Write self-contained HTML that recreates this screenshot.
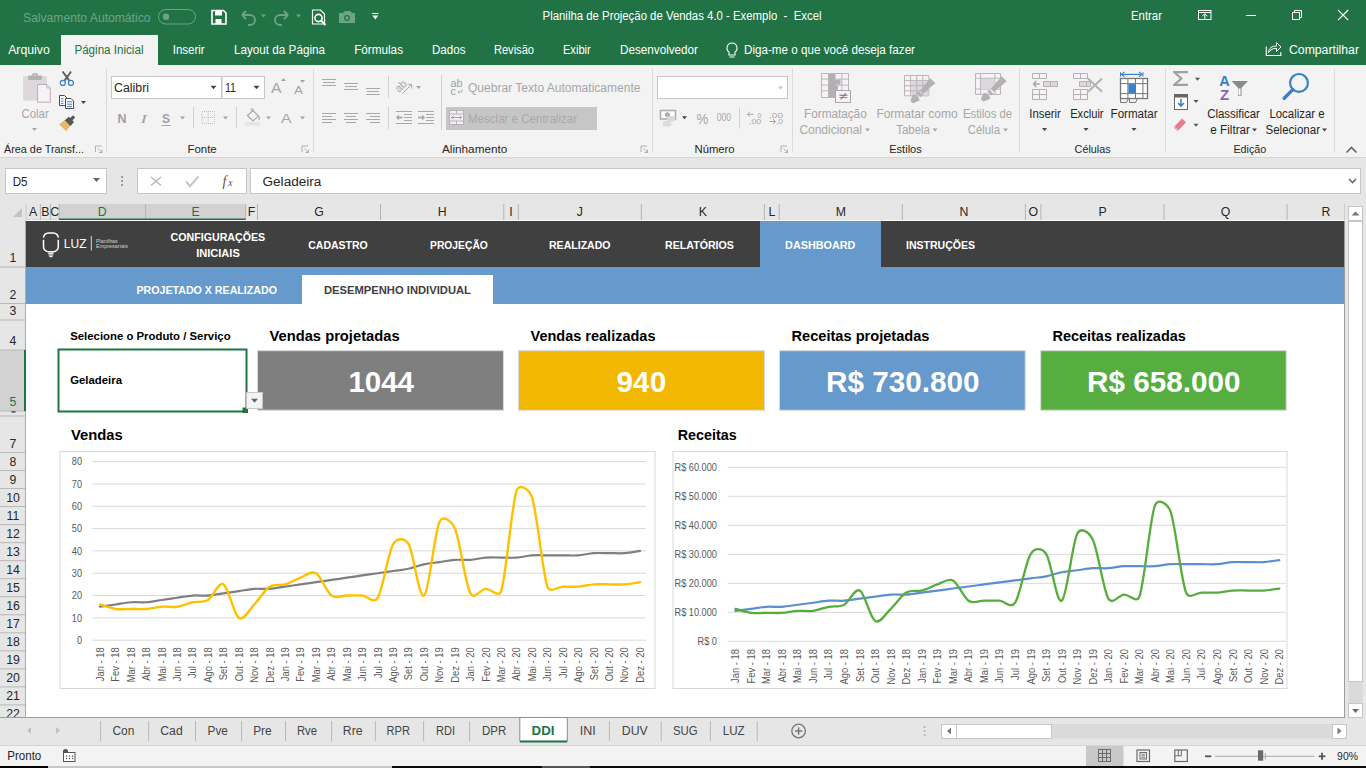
<!DOCTYPE html>
<html><head><meta charset="utf-8"><style>
html,body{margin:0;padding:0;width:1366px;height:768px;overflow:hidden;background:#fff;}
svg{display:block;font-family:"Liberation Sans",sans-serif;}
</style></head><body>
<svg width="1366" height="768" viewBox="0 0 1366 768">
<rect x="0" y="0" width="1366" height="65" fill="#217346" />
<rect x="0" y="65" width="1366" height="92" fill="#f3f3f3" />
<line x1="0" y1="157.5" x2="1366" y2="157.5" stroke="#d5d5d5" stroke-width="1" />
<rect x="0" y="158" width="1366" height="560" fill="#e6e6e6" />
<rect x="0" y="718" width="1366" height="27" fill="#e6e6e6" />
<rect x="0" y="745" width="1366" height="21" fill="#f3f3f3" />
<line x1="0" y1="745.5" x2="1366" y2="745.5" stroke="#d5d5d5" stroke-width="1" />
<rect x="0" y="766" width="1366" height="2" fill="#111" />
<text x="23.0" y="22.0" font-size="12" fill="#6ea486" textLength="127.5" lengthAdjust="spacingAndGlyphs" >Salvamento Automático</text>
<rect x="158.5" y="9.5" width="37" height="14.5" rx="7.25" fill="none" stroke="#6ea486" stroke-width="1"/>
<circle cx="166" cy="16.8" r="3.2" fill="#6ea486"/>
<path d="M212,10.5 h11.5 l2.5,2.5 v11 h-14 z" fill="none" stroke="#fff" stroke-width="1.6" />
<rect x="215" y="11" width="7" height="4.5" fill="#fff" />
<rect x="215.5" y="19" width="6" height="5" fill="#fff" />
<path d="M242,15 l4,-4 M242,15 l4,4 M242,15 h8 a5,5 0 0 1 0,10 h-2" fill="none" stroke="#6ea486" stroke-width="1.8" />
<path d="M261.0,14.5 L266.0,14.5 L263.5,17.5 Z" fill="#6ea486" />
<path d="M288,15 l-4,-4 M288,15 l-4,4 M288,15 h-8 a5,5 0 0 0 0,10 h2" fill="none" stroke="#6ea486" stroke-width="1.8" />
<path d="M296.0,14.5 L301.0,14.5 L298.5,17.5 Z" fill="#6ea486" />
<path d="M312.5,10 h8 l4,4 v10 h-12 z" fill="none" stroke="#fff" stroke-width="1.2" />
<circle cx="318.5" cy="18" r="3.6" fill="none" stroke="#fff" stroke-width="1.6"/>
<line x1="321" y1="20.5" x2="325.5" y2="25" stroke="#fff" stroke-width="2" />
<path d="M339,13 h4 l2,-2 h5 l2,2 h3 v10 h-16 z" fill="#6ea486" />
<circle cx="347" cy="18" r="3" fill="#217346"/>
<circle cx="347" cy="18" r="1.8" fill="#6ea486"/>
<line x1="372" y1="13.5" x2="378.5" y2="13.5" stroke="#fff" stroke-width="1" />
<path d="M372.3,15.5 L378.3,15.5 L375.3,19.5 Z" fill="#fff" />
<text x="542.6" y="19.9" font-size="12" fill="#fff" textLength="278.9" lengthAdjust="spacingAndGlyphs" xml:space="preserve">Planilha de Projeção de Vendas 4.0 - Exemplo  -  Excel</text>
<text x="1131.0" y="20.0" font-size="12" fill="#fff" textLength="31.0" lengthAdjust="spacingAndGlyphs" >Entrar</text>
<rect x="1198.5" y="10.5" width="12.5" height="9" fill="none" stroke="#fff" stroke-width="1" />
<line x1="1198.5" y1="12.5" x2="1211" y2="12.5" stroke="#fff" stroke-width="1" />
<path d="M1202.2,16.3 l2.6,-2.6 l2.6,2.6" fill="none" stroke="#fff" stroke-width="1" />
<line x1="1204.8" y1="14" x2="1204.8" y2="19.5" stroke="#fff" stroke-width="1" />
<line x1="1246" y1="15.5" x2="1256" y2="15.5" stroke="#fff" stroke-width="1" />
<rect x="1292.5" y="12.5" width="7" height="7" fill="none" stroke="#fff" stroke-width="1" />
<path d="M1294.5,12.5 v-2 h7 v7 h-2" fill="none" stroke="#fff" stroke-width="1" />
<line x1="1338" y1="10" x2="1348.2" y2="20.2" stroke="#fff" stroke-width="1.1" />
<line x1="1348.2" y1="10" x2="1338" y2="20.2" stroke="#fff" stroke-width="1.1" />
<rect x="61" y="35" width="97" height="30" fill="#f3f3f3" />
<text x="8.2" y="53.8" font-size="12" fill="#fff" textLength="41.6" lengthAdjust="spacingAndGlyphs" >Arquivo</text>
<text x="74.4" y="53.8" font-size="12" fill="#217346" textLength="69.1" lengthAdjust="spacingAndGlyphs" >Página Inicial</text>
<text x="172.7" y="53.8" font-size="12" fill="#fff" textLength="32.0" lengthAdjust="spacingAndGlyphs" >Inserir</text>
<text x="234.0" y="53.8" font-size="12" fill="#fff" textLength="91.0" lengthAdjust="spacingAndGlyphs" >Layout da Página</text>
<text x="354.2" y="53.8" font-size="12" fill="#fff" textLength="48.8" lengthAdjust="spacingAndGlyphs" >Fórmulas</text>
<text x="432.0" y="53.8" font-size="12" fill="#fff" textLength="33.5" lengthAdjust="spacingAndGlyphs" >Dados</text>
<text x="493.9" y="53.8" font-size="12" fill="#fff" textLength="40.1" lengthAdjust="spacingAndGlyphs" >Revisão</text>
<text x="562.9" y="53.8" font-size="12" fill="#fff" textLength="27.9" lengthAdjust="spacingAndGlyphs" >Exibir</text>
<text x="620.0" y="53.8" font-size="12" fill="#fff" textLength="78.0" lengthAdjust="spacingAndGlyphs" >Desenvolvedor</text>
<text x="744.0" y="53.8" font-size="12" fill="#fff" textLength="171.0" lengthAdjust="spacingAndGlyphs" >Diga-me o que você deseja fazer</text>
<text x="1289.0" y="53.8" font-size="12" fill="#fff" textLength="70.0" lengthAdjust="spacingAndGlyphs" >Compartilhar</text>
<path d="M732,43 a5,5 0 0 0 -3,9 v3 h6 v-3 a5,5 0 0 0 -3,-9 z" fill="none" stroke="#fff" stroke-width="1.1" />
<line x1="729.5" y1="57" x2="734.5" y2="57" stroke="#fff" stroke-width="1" />
<path d="M1266.3,46.5 v9 h14.5 v-3.5" fill="none" stroke="#fff" stroke-width="1.1" />
<path d="M1268.5,52.5 c0.5,-4.5 3.5,-6.5 8,-6.5 v-3.3 l4.5,4.3 l-4.5,4.3 v-3 c-3.5,0 -6,1.2 -8,4.2 z" fill="none" stroke="#fff" stroke-width="1" />
<rect x="23" y="76" width="24" height="24.6" rx="1.5" fill="#dcd8dc"/>
<rect x="28" y="75.5" width="14" height="4.4" rx="1" fill="#b4b1b4"/>
<rect x="32.3" y="73.3" width="5.5" height="3.5" rx="1" fill="#b4b1b4"/>
<circle cx="35" cy="75.3" r="0.9" fill="#dcd8dc"/>
<path d="M37.6,84.5 h9.2 l3.5,3.5 v14.2 h-12.7 z" fill="#f6f2f6" stroke="#b4b1b4" stroke-width="1" />
<path d="M46.8,84.5 v3.5 h3.5" fill="none" stroke="#b4b1b4" stroke-width="0.8" />
<text x="21.5" y="118.0" font-size="12" fill="#a6a6a6" textLength="27.2" lengthAdjust="spacingAndGlyphs" >Colar</text>
<path d="M32.0,128.0 L37.0,128.0 L34.5,131.0 Z" fill="#a6a6a6" />
<path d="M62.6,71.5 L69.2,80.6 M71.1,71.5 L64.5,80.6" fill="none" stroke="#5a5a5a" stroke-width="1.8" />
<circle cx="62.8" cy="82.9" r="2.5" fill="none" stroke="#3b7fc4" stroke-width="1.2"/>
<circle cx="70.9" cy="82.9" r="2.5" fill="none" stroke="#3b7fc4" stroke-width="1.2"/>
<path d="M59.5,95.5 h5 l2,2 v8 h-7 z" fill="#fff" stroke="#4a4a4a" stroke-width="1" />
<line x1="61" y1="98.8" x2="63.5" y2="98.8" stroke="#3b7fc4" stroke-width="1" />
<line x1="61" y1="101.2" x2="63.5" y2="101.2" stroke="#3b7fc4" stroke-width="1" />
<line x1="61" y1="103.6" x2="63.5" y2="103.6" stroke="#3b7fc4" stroke-width="1" />
<path d="M65.5,98.5 h5.5 l2.5,2.5 v7.5 h-8 z" fill="#fff" stroke="#4a4a4a" stroke-width="1" />
<line x1="67" y1="101.8" x2="72" y2="101.8" stroke="#3b7fc4" stroke-width="1" />
<line x1="67" y1="104.2" x2="72" y2="104.2" stroke="#3b7fc4" stroke-width="1" />
<line x1="67" y1="106.6" x2="72" y2="106.6" stroke="#3b7fc4" stroke-width="1" />
<path d="M81.0,100.9 L86.0,100.9 L83.5,103.9 Z" fill="#444" />
<path d="M59.2,124.5 L65,119.8 L70.5,125.5 L66.3,131.2 Z" fill="#e6b66a" />
<path d="M64.8,120.3 l4,-3.5 l5.2,5.2 l-3.5,4 z" fill="#555" />
<path d="M69.5,118.8 l3.5,-3.5 l2.2,2.2 l-3.5,3.5 z" fill="#555" />
<text x="4.0" y="152.7" font-size="11" fill="#262626" textLength="80.0" lengthAdjust="spacingAndGlyphs" >Área de Transf...</text>
<path d="M95.5,152 v-6 h6" fill="none" stroke="#a8a8a8" stroke-width="0.9" />
<path d="M98.0,148.5 l4,4 M102.0,149.5 v3 h-3" fill="none" stroke="#a8a8a8" stroke-width="0.9" />
<line x1="106.5" y1="69" x2="106.5" y2="152" stroke="#dadada" stroke-width="1" />
<rect x="111.5" y="76.5" width="110" height="22" fill="#fff" stroke="#c6c6c6" stroke-width="1" />
<text x="114.0" y="91.5" font-size="12.3" fill="#262626" textLength="35.0" lengthAdjust="spacingAndGlyphs" >Calibri</text>
<path d="M210.5,85.75 L216.5,85.75 L213.5,89.25 Z" fill="#444" />
<rect x="222" y="76.5" width="42.5" height="22" fill="#fff" stroke="#c6c6c6" stroke-width="1" />
<text x="225.0" y="91.5" font-size="12.3" fill="#262626" textLength="11.0" lengthAdjust="spacingAndGlyphs" >11</text>
<path d="M253.5,85.75 L259.5,85.75 L256.5,89.25 Z" fill="#444" />
<text x="271.0" y="93.0" font-size="14" fill="#a6a6a6" textLength="10.5" lengthAdjust="spacingAndGlyphs" >A</text>
<path d="M281,81 l2.5,-3 l2.5,3 z" fill="#a6a6a6" />
<text x="294.0" y="94.0" font-size="11" fill="#a6a6a6" textLength="9.0" lengthAdjust="spacingAndGlyphs" >A</text>
<path d="M300,80 l2.5,3 l2.5,-3 z" fill="#a6a6a6" />
<text x="117.5" y="122.5" font-size="12" fill="#a0a0a0" font-weight="bold" textLength="9.0" lengthAdjust="spacingAndGlyphs" >N</text>
<text x="140.5" y="122.5" font-size="12.5" fill="#a0a0a0" textLength="6.5" lengthAdjust="spacingAndGlyphs" font-style="italic" font-family="Liberation Serif">I</text>
<text x="162.0" y="122.5" font-size="12" fill="#a0a0a0" font-weight="bold" textLength="8.0" lengthAdjust="spacingAndGlyphs" >S</text>
<line x1="161.5" y1="125.5" x2="170.5" y2="125.5" stroke="#a6a6a6" stroke-width="1" />
<path d="M180.0,116.5 L185.0,116.5 L182.5,119.5 Z" fill="#a6a6a6" />
<line x1="193.5" y1="107" x2="193.5" y2="128" stroke="#d0d0d0" stroke-width="1" />
<rect x="202" y="111.5" width="12.5" height="12" fill="none" stroke="#c9b9c9" stroke-width="1" stroke-dasharray="1,1"/>
<line x1="208.2" y1="111.5" x2="208.2" y2="123.5" stroke="#c9b9c9" stroke-width="1" stroke-dasharray="1,1"/>
<line x1="202" y1="117.5" x2="214.5" y2="117.5" stroke="#c9b9c9" stroke-width="1" stroke-dasharray="1,1"/>
<path d="M223.0,116.5 L228.0,116.5 L225.5,119.5 Z" fill="#a6a6a6" />
<line x1="236.5" y1="107" x2="236.5" y2="128" stroke="#d0d0d0" stroke-width="1" />
<path d="M247.5,115.5 l5.5,-5 l5.5,5.5 l-5.5,5 z" fill="none" stroke="#a8a8a8" stroke-width="1.1" />
<path d="M251,110.5 v-1.5 h2 v3" fill="none" stroke="#a8a8a8" stroke-width="1" />
<path d="M258.5,116 q1.5,2 0.5,4" fill="none" stroke="#a8a8a8" stroke-width="1.2" />
<rect x="244.5" y="122.2" width="15.5" height="3.3" fill="#e6e1e6" />
<path d="M266.0,116.5 L271.0,116.5 L268.5,119.5 Z" fill="#a6a6a6" />
<text x="281.0" y="122.5" font-size="13" fill="#a6a6a6" textLength="10.5" lengthAdjust="spacingAndGlyphs" >A</text>
<path d="M300.0,116.5 L305.0,116.5 L302.5,119.5 Z" fill="#a6a6a6" />
<text x="187.4" y="152.7" font-size="11" fill="#262626" textLength="29.3" lengthAdjust="spacingAndGlyphs" >Fonte</text>
<path d="M302,152 v-6 h6" fill="none" stroke="#a8a8a8" stroke-width="0.9" />
<path d="M304.5,148.5 l4,4 M308.5,149.5 v3 h-3" fill="none" stroke="#a8a8a8" stroke-width="0.9" />
<line x1="313.5" y1="69" x2="313.5" y2="152" stroke="#dadada" stroke-width="1" />
<line x1="322" y1="79.5" x2="336" y2="79.5" stroke="#a8a8a8" stroke-width="1" />
<line x1="323" y1="82.5" x2="335" y2="82.5" stroke="#a8a8a8" stroke-width="1" />
<line x1="322" y1="85.5" x2="336" y2="85.5" stroke="#a8a8a8" stroke-width="1" />
<line x1="344" y1="83.5" x2="358" y2="83.5" stroke="#a8a8a8" stroke-width="1" />
<line x1="345" y1="86.5" x2="357" y2="86.5" stroke="#a8a8a8" stroke-width="1" />
<line x1="344" y1="89.5" x2="358" y2="89.5" stroke="#a8a8a8" stroke-width="1" />
<line x1="366" y1="88.5" x2="380" y2="88.5" stroke="#a8a8a8" stroke-width="1" />
<line x1="367" y1="91.5" x2="379" y2="91.5" stroke="#a8a8a8" stroke-width="1" />
<line x1="366" y1="94.5" x2="380" y2="94.5" stroke="#a8a8a8" stroke-width="1" />
<line x1="388.5" y1="76" x2="388.5" y2="98" stroke="#d0d0d0" stroke-width="1" />
<text x="0" y="0" font-size="11" fill="#a8a8a8" transform="translate(399,93) rotate(-45)">ab</text>
<line x1="402.5" y1="93.5" x2="411.5" y2="84.5" stroke="#a8a8a8" stroke-width="1" />
<path d="M407.5,84.3 h4.2 v4.2" fill="none" stroke="#a8a8a8" stroke-width="1" />
<path d="M416.0,86.0 L421.0,86.0 L418.5,89.0 Z" fill="#a8a8a8" />
<line x1="441.5" y1="75" x2="441.5" y2="130" stroke="#d0d0d0" stroke-width="1" />
<text x="450.5" y="87.0" font-size="10.5" fill="#a0a0a0" textLength="12.0" lengthAdjust="spacingAndGlyphs" >ab</text>
<text x="450.5" y="94.5" font-size="10.5" fill="#a0a0a0" textLength="5.5" lengthAdjust="spacingAndGlyphs" >c</text>
<path d="M462,89 v3 h-4 m1.5,-1.5 l-1.5,1.5 l1.5,1.5" fill="none" stroke="#a6a6a6" stroke-width="0.8" />
<text x="468.0" y="92.0" font-size="12" fill="#a6a6a6" textLength="172.5" lengthAdjust="spacingAndGlyphs" >Quebrar Texto Automaticamente</text>
<line x1="322" y1="113.5" x2="336" y2="113.5" stroke="#a8a8a8" stroke-width="1" />
<line x1="322" y1="116.5" x2="332" y2="116.5" stroke="#a8a8a8" stroke-width="1" />
<line x1="322" y1="119.5" x2="336" y2="119.5" stroke="#a8a8a8" stroke-width="1" />
<line x1="322" y1="122.5" x2="332" y2="122.5" stroke="#a8a8a8" stroke-width="1" />
<line x1="344" y1="113.5" x2="358" y2="113.5" stroke="#a8a8a8" stroke-width="1" />
<line x1="346" y1="116.5" x2="356" y2="116.5" stroke="#a8a8a8" stroke-width="1" />
<line x1="344" y1="119.5" x2="358" y2="119.5" stroke="#a8a8a8" stroke-width="1" />
<line x1="346" y1="122.5" x2="356" y2="122.5" stroke="#a8a8a8" stroke-width="1" />
<line x1="366" y1="113.5" x2="380" y2="113.5" stroke="#a8a8a8" stroke-width="1" />
<line x1="370" y1="116.5" x2="380" y2="116.5" stroke="#a8a8a8" stroke-width="1" />
<line x1="366" y1="119.5" x2="380" y2="119.5" stroke="#a8a8a8" stroke-width="1" />
<line x1="370" y1="122.5" x2="380" y2="122.5" stroke="#a8a8a8" stroke-width="1" />
<line x1="388.5" y1="107" x2="388.5" y2="129" stroke="#d0d0d0" stroke-width="1" />
<line x1="396" y1="111.5" x2="412" y2="111.5" stroke="#a8a8a8" stroke-width="1" />
<line x1="404" y1="114.5" x2="412" y2="114.5" stroke="#a8a8a8" stroke-width="1" />
<line x1="404" y1="117.5" x2="412" y2="117.5" stroke="#a8a8a8" stroke-width="1" />
<line x1="404" y1="120.5" x2="412" y2="120.5" stroke="#a8a8a8" stroke-width="1" />
<line x1="396" y1="123.5" x2="412" y2="123.5" stroke="#a8a8a8" stroke-width="1" />
<path d="M396,117.5 l3,-3 v6 z" fill="#a8a8a8" />
<rect x="398.5" y="116.6" width="4" height="1.8" fill="#a8a8a8" />
<line x1="418" y1="111.5" x2="434" y2="111.5" stroke="#a8a8a8" stroke-width="1" />
<line x1="426" y1="114.5" x2="434" y2="114.5" stroke="#a8a8a8" stroke-width="1" />
<line x1="426" y1="117.5" x2="434" y2="117.5" stroke="#a8a8a8" stroke-width="1" />
<line x1="426" y1="120.5" x2="434" y2="120.5" stroke="#a8a8a8" stroke-width="1" />
<line x1="418" y1="123.5" x2="434" y2="123.5" stroke="#a8a8a8" stroke-width="1" />
<path d="M425,117.5 l-3,-3 v6 z" fill="#a8a8a8" />
<rect x="418" y="116.6" width="4.5" height="1.8" fill="#a8a8a8" />
<rect x="446" y="107" width="151" height="23" fill="#c6c6c6" />
<rect x="449.5" y="110.5" width="14" height="14" fill="#f3eff3" stroke="#b8b0b8" stroke-width="1" />
<line x1="449.5" y1="114" x2="463.5" y2="114" stroke="#b8b0b8" stroke-width="1" />
<line x1="449.5" y1="121" x2="463.5" y2="121" stroke="#b8b0b8" stroke-width="1" />
<line x1="456.5" y1="110.5" x2="456.5" y2="114" stroke="#b8b0b8" stroke-width="1" />
<line x1="456.5" y1="121" x2="456.5" y2="124.5" stroke="#b8b0b8" stroke-width="1" />
<path d="M451.5,117.5 h10 M451.5,117.5 l2,-1.8 M451.5,117.5 l2,1.8 M461.5,117.5 l-2,-1.8 M461.5,117.5 l-2,1.8" fill="none" stroke="#a09aa0" stroke-width="0.9" />
<text x="468.0" y="122.5" font-size="12" fill="#a9a9a9" textLength="109.0" lengthAdjust="spacingAndGlyphs" >Mesclar e Centralizar</text>
<text x="442.0" y="152.7" font-size="11" fill="#262626" textLength="65.3" lengthAdjust="spacingAndGlyphs" >Alinhamento</text>
<path d="M641,152 v-6 h6" fill="none" stroke="#a8a8a8" stroke-width="0.9" />
<path d="M643.5,148.5 l4,4 M647.5,149.5 v3 h-3" fill="none" stroke="#a8a8a8" stroke-width="0.9" />
<line x1="652.5" y1="69" x2="652.5" y2="152" stroke="#dadada" stroke-width="1" />
<rect x="657.5" y="76.5" width="130" height="22" fill="#fff" stroke="#c6c6c6" stroke-width="1" />
<path d="M778.0,86.5 L783.0,86.5 L780.5,89.5 Z" fill="#c0c0c0" />
<rect x="660.5" y="110.5" width="15" height="8.5" fill="#ffffff" stroke="#b0acb0" stroke-width="1.6" />
<circle cx="667.5" cy="114.8" r="2.6" fill="#b0acb0"/>
<ellipse cx="671" cy="117.5" rx="4.5" ry="1.4" fill="#dcd8dc"/>
<ellipse cx="671" cy="120" rx="4.5" ry="1.4" fill="#dcd8dc"/>
<ellipse cx="667" cy="122.5" rx="4.5" ry="1.4" fill="#dcd8dc"/>
<ellipse cx="667" cy="125" rx="4.5" ry="1.4" fill="#dcd8dc"/>
<path d="M682.0,116.3 L687.0,116.3 L684.5,119.3 Z" fill="#444" />
<text x="696.6" y="124.0" font-size="15" fill="#a6a6a6" textLength="11.8" lengthAdjust="spacingAndGlyphs" >%</text>
<text x="716.8" y="121.0" font-size="10" fill="#a6a6a6" textLength="14.3" lengthAdjust="spacingAndGlyphs" >000</text>
<line x1="739.5" y1="107.5" x2="739.5" y2="128.5" stroke="#d0d0d0" stroke-width="1" />
<path d="M747.5,114.3 h6 M747.5,114.3 l2.5,-2.5 M747.5,114.3 l2.5,2.5" fill="none" stroke="#a6a6a6" stroke-width="1" />
<text x="757.5" y="117.5" font-size="7.5" fill="#a6a6a6" textLength="3.8" lengthAdjust="spacingAndGlyphs" >0</text>
<text x="749.0" y="124.3" font-size="7.5" fill="#a6a6a6" textLength="12.3" lengthAdjust="spacingAndGlyphs" >,00</text>
<text x="769.0" y="117.5" font-size="7.5" fill="#a6a6a6" textLength="14.0" lengthAdjust="spacingAndGlyphs" >,00</text>
<path d="M769.5,121.5 h6 M775.5,121.5 l-2.5,-2.5 M775.5,121.5 l-2.5,2.5" fill="none" stroke="#a6a6a6" stroke-width="1" />
<text x="776.0" y="124.3" font-size="7.5" fill="#a6a6a6" textLength="7.0" lengthAdjust="spacingAndGlyphs" >,0</text>
<text x="694.5" y="152.7" font-size="11" fill="#262626" textLength="40.1" lengthAdjust="spacingAndGlyphs" >Número</text>
<path d="M781,152 v-6 h6" fill="none" stroke="#a8a8a8" stroke-width="0.9" />
<path d="M783.5,148.5 l4,4 M787.5,149.5 v3 h-3" fill="none" stroke="#a8a8a8" stroke-width="0.9" />
<line x1="792.5" y1="69" x2="792.5" y2="152" stroke="#dadada" stroke-width="1" />
<rect x="821.5" y="73.5" width="27.0" height="24.0" fill="#f6f2f6" />
<line x1="821.5" y1="73.5" x2="821.5" y2="97.5" stroke="#b9b5b9" stroke-width="1" />
<line x1="828.5" y1="73.5" x2="828.5" y2="97.5" stroke="#b9b5b9" stroke-width="1" />
<line x1="835" y1="73.5" x2="835" y2="97.5" stroke="#b9b5b9" stroke-width="1" />
<line x1="841.8" y1="73.5" x2="841.8" y2="97.5" stroke="#b9b5b9" stroke-width="1" />
<line x1="848.5" y1="73.5" x2="848.5" y2="97.5" stroke="#b9b5b9" stroke-width="1" />
<line x1="821.5" y1="73.5" x2="848.5" y2="73.5" stroke="#b9b5b9" stroke-width="1" />
<line x1="821.5" y1="79.1" x2="848.5" y2="79.1" stroke="#b9b5b9" stroke-width="1" />
<line x1="821.5" y1="85.1" x2="848.5" y2="85.1" stroke="#b9b5b9" stroke-width="1" />
<line x1="821.5" y1="90.8" x2="848.5" y2="90.8" stroke="#b9b5b9" stroke-width="1" />
<line x1="821.5" y1="97.5" x2="848.5" y2="97.5" stroke="#b9b5b9" stroke-width="1" />
<rect x="829" y="74" width="6" height="23" fill="#b3afb3" />
<rect x="835" y="79.6" width="5.5" height="5" fill="#b3afb3" />
<rect x="835" y="85.6" width="3" height="4.7" fill="#b3afb3" />
<rect x="835.5" y="90.5" width="15" height="12" fill="#f6f2f6" stroke="#aaa6aa" stroke-width="1" />
<text x="838.5" y="100.2" font-size="11" fill="#777" textLength="9.0" lengthAdjust="spacingAndGlyphs" >≠</text>
<text x="804.0" y="117.8" font-size="12" fill="#a6a6a6" textLength="62.7" lengthAdjust="spacingAndGlyphs" >Formatação</text>
<text x="799.4" y="133.7" font-size="12" fill="#a6a6a6" textLength="62.6" lengthAdjust="spacingAndGlyphs" >Condicional</text>
<path d="M865.0,128.5 L870.0,128.5 L867.5,131.5 Z" fill="#a6a6a6" />
<rect x="904.5" y="75.5" width="24.299999999999955" height="20.299999999999997" fill="#f6f2f6" />
<line x1="904.5" y1="75.5" x2="904.5" y2="95.8" stroke="#b9b5b9" stroke-width="1" />
<line x1="910.6" y1="75.5" x2="910.6" y2="95.8" stroke="#b9b5b9" stroke-width="1" />
<line x1="916.8" y1="75.5" x2="916.8" y2="95.8" stroke="#b9b5b9" stroke-width="1" />
<line x1="922.8" y1="75.5" x2="922.8" y2="95.8" stroke="#b9b5b9" stroke-width="1" />
<line x1="928.8" y1="75.5" x2="928.8" y2="95.8" stroke="#b9b5b9" stroke-width="1" />
<line x1="904.5" y1="75.5" x2="928.8" y2="75.5" stroke="#b9b5b9" stroke-width="1" />
<line x1="904.5" y1="80.6" x2="928.8" y2="80.6" stroke="#b9b5b9" stroke-width="1" />
<line x1="904.5" y1="85.7" x2="928.8" y2="85.7" stroke="#b9b5b9" stroke-width="1" />
<line x1="904.5" y1="90.8" x2="928.8" y2="90.8" stroke="#b9b5b9" stroke-width="1" />
<line x1="904.5" y1="95.8" x2="928.8" y2="95.8" stroke="#b9b5b9" stroke-width="1" />
<rect x="911" y="81" width="17.5" height="14.5" fill="#dcd8dc" />
<line x1="916.8" y1="80.6" x2="916.8" y2="95.8" stroke="#b9b5b9" stroke-width="1" />
<line x1="922.8" y1="80.6" x2="922.8" y2="95.8" stroke="#b9b5b9" stroke-width="1" />
<line x1="910.6" y1="85.7" x2="928.8" y2="85.7" stroke="#b9b5b9" stroke-width="1" />
<line x1="910.6" y1="90.8" x2="928.8" y2="90.8" stroke="#b9b5b9" stroke-width="1" />
<path d="M910.34,100.53 L913.15,94.16 Q918.81,94.86 919.53,100.51 L913.17,103.36 Q911.05,102.65 910.34,100.53 Z" fill="#b4b0b4" />
<path d="M916.47,93.24 L918.59,91.11 L922.56,95.06 L920.44,97.19 Z" fill="#b4b0b4" />
<path d="M920.07,90.47 L930.25,78.26 L935.35,83.34 L923.19,93.58 Z" fill="#b4b0b4" />
<text x="876.4" y="117.8" font-size="12" fill="#a6a6a6" textLength="81.2" lengthAdjust="spacingAndGlyphs" >Formatar como</text>
<text x="896.2" y="133.7" font-size="12" fill="#a6a6a6" textLength="33.8" lengthAdjust="spacingAndGlyphs" >Tabela</text>
<path d="M932.5,128.5 L937.5,128.5 L935,131.5 Z" fill="#a6a6a6" />
<rect x="975.5" y="73.5" width="25.0" height="20.900000000000006" fill="#f6f2f6" />
<line x1="975.5" y1="73.5" x2="975.5" y2="94.4" stroke="#b9b5b9" stroke-width="1" />
<line x1="980.6" y1="73.5" x2="980.6" y2="94.4" stroke="#b9b5b9" stroke-width="1" />
<line x1="994.9" y1="73.5" x2="994.9" y2="94.4" stroke="#b9b5b9" stroke-width="1" />
<line x1="1000.5" y1="73.5" x2="1000.5" y2="94.4" stroke="#b9b5b9" stroke-width="1" />
<line x1="975.5" y1="73.5" x2="1000.5" y2="73.5" stroke="#b9b5b9" stroke-width="1" />
<line x1="975.5" y1="78.3" x2="1000.5" y2="78.3" stroke="#b9b5b9" stroke-width="1" />
<line x1="975.5" y1="89.1" x2="1000.5" y2="89.1" stroke="#b9b5b9" stroke-width="1" />
<line x1="975.5" y1="94.4" x2="1000.5" y2="94.4" stroke="#b9b5b9" stroke-width="1" />
<rect x="981.1" y="78.8" width="13.3" height="9.8" fill="#dcd8dc" />
<path d="M980.96,98.72 L983.84,92.38 Q989.49,93.14 990.15,98.81 L983.76,101.58 Q981.64,100.85 980.96,98.72 Z" fill="#b4b0b4" />
<path d="M987.17,91.50 L989.31,89.39 L993.24,93.39 L991.10,95.49 Z" fill="#b4b0b4" />
<path d="M990.80,88.77 L1001.68,76.13 L1006.72,81.27 L993.89,91.91 Z" fill="#b4b0b4" />
<text x="963.0" y="117.8" font-size="12" fill="#a6a6a6" textLength="49.0" lengthAdjust="spacingAndGlyphs" >Estilos de</text>
<text x="967.7" y="133.7" font-size="12" fill="#a6a6a6" textLength="32.3" lengthAdjust="spacingAndGlyphs" >Célula</text>
<path d="M1003.0,128.5 L1008.0,128.5 L1005.5,131.5 Z" fill="#a6a6a6" />
<text x="889.2" y="152.7" font-size="11" fill="#262626" textLength="32.6" lengthAdjust="spacingAndGlyphs" >Estilos</text>
<line x1="1019.5" y1="69" x2="1019.5" y2="152" stroke="#dadada" stroke-width="1" />
<rect x="1032.5" y="73.5" width="14.0" height="5.0" fill="#f6f2f6" />
<line x1="1032.5" y1="73.5" x2="1032.5" y2="78.5" stroke="#b4b0b4" stroke-width="1" />
<line x1="1039.5" y1="73.5" x2="1039.5" y2="78.5" stroke="#b4b0b4" stroke-width="1" />
<line x1="1046.5" y1="73.5" x2="1046.5" y2="78.5" stroke="#b4b0b4" stroke-width="1" />
<line x1="1032.5" y1="73.5" x2="1046.5" y2="73.5" stroke="#b4b0b4" stroke-width="1" />
<line x1="1032.5" y1="78.5" x2="1046.5" y2="78.5" stroke="#b4b0b4" stroke-width="1" />
<rect x="1043.5" y="81.5" width="14.0" height="5.0" fill="#dcd8dc" />
<line x1="1043.5" y1="81.5" x2="1043.5" y2="86.5" stroke="#b4b0b4" stroke-width="1" />
<line x1="1050.5" y1="81.5" x2="1050.5" y2="86.5" stroke="#b4b0b4" stroke-width="1" />
<line x1="1057.5" y1="81.5" x2="1057.5" y2="86.5" stroke="#b4b0b4" stroke-width="1" />
<line x1="1043.5" y1="81.5" x2="1057.5" y2="81.5" stroke="#b4b0b4" stroke-width="1" />
<line x1="1043.5" y1="86.5" x2="1057.5" y2="86.5" stroke="#b4b0b4" stroke-width="1" />
<rect x="1032.5" y="89.5" width="14.0" height="10.0" fill="#f6f2f6" />
<line x1="1032.5" y1="89.5" x2="1032.5" y2="99.5" stroke="#b4b0b4" stroke-width="1" />
<line x1="1039.5" y1="89.5" x2="1039.5" y2="99.5" stroke="#b4b0b4" stroke-width="1" />
<line x1="1046.5" y1="89.5" x2="1046.5" y2="99.5" stroke="#b4b0b4" stroke-width="1" />
<line x1="1032.5" y1="89.5" x2="1046.5" y2="89.5" stroke="#b4b0b4" stroke-width="1" />
<line x1="1032.5" y1="94.5" x2="1046.5" y2="94.5" stroke="#b4b0b4" stroke-width="1" />
<line x1="1032.5" y1="99.5" x2="1046.5" y2="99.5" stroke="#b4b0b4" stroke-width="1" />
<path d="M1033.3,84 l3,-3 M1033.3,84 l3,3 M1033.3,84 h6.5" fill="none" stroke="#a8a8a8" stroke-width="1.6" />
<text x="1029.3" y="117.6" font-size="12" fill="#262626" textLength="31.5" lengthAdjust="spacingAndGlyphs" >Inserir</text>
<path d="M1042.0,128.0 L1047.0,128.0 L1044.5,131.0 Z" fill="#444" />
<rect x="1073.5" y="73.5" width="14.0" height="5.0" fill="#f6f2f6" />
<line x1="1073.5" y1="73.5" x2="1073.5" y2="78.5" stroke="#b4b0b4" stroke-width="1" />
<line x1="1080.5" y1="73.5" x2="1080.5" y2="78.5" stroke="#b4b0b4" stroke-width="1" />
<line x1="1087.5" y1="73.5" x2="1087.5" y2="78.5" stroke="#b4b0b4" stroke-width="1" />
<line x1="1073.5" y1="73.5" x2="1087.5" y2="73.5" stroke="#b4b0b4" stroke-width="1" />
<line x1="1073.5" y1="78.5" x2="1087.5" y2="78.5" stroke="#b4b0b4" stroke-width="1" />
<rect x="1079.5" y="81.5" width="11.0" height="5.0" fill="#dcd8dc" />
<line x1="1079.5" y1="81.5" x2="1079.5" y2="86.5" stroke="#b4b0b4" stroke-width="1" />
<line x1="1086.5" y1="81.5" x2="1086.5" y2="86.5" stroke="#b4b0b4" stroke-width="1" />
<line x1="1090.5" y1="81.5" x2="1090.5" y2="86.5" stroke="#b4b0b4" stroke-width="1" />
<line x1="1079.5" y1="81.5" x2="1090.5" y2="81.5" stroke="#b4b0b4" stroke-width="1" />
<line x1="1079.5" y1="86.5" x2="1090.5" y2="86.5" stroke="#b4b0b4" stroke-width="1" />
<rect x="1073.5" y="89.5" width="14.0" height="10.0" fill="#f6f2f6" />
<line x1="1073.5" y1="89.5" x2="1073.5" y2="99.5" stroke="#b4b0b4" stroke-width="1" />
<line x1="1080.5" y1="89.5" x2="1080.5" y2="99.5" stroke="#b4b0b4" stroke-width="1" />
<line x1="1087.5" y1="89.5" x2="1087.5" y2="99.5" stroke="#b4b0b4" stroke-width="1" />
<line x1="1073.5" y1="89.5" x2="1087.5" y2="89.5" stroke="#b4b0b4" stroke-width="1" />
<line x1="1073.5" y1="94.5" x2="1087.5" y2="94.5" stroke="#b4b0b4" stroke-width="1" />
<line x1="1073.5" y1="99.5" x2="1087.5" y2="99.5" stroke="#b4b0b4" stroke-width="1" />
<path d="M1088,78.4 L1102,91.7 M1102,78.4 L1088,91.7" fill="none" stroke="#b4b0b4" stroke-width="2" />
<text x="1070.2" y="117.8" font-size="12" fill="#262626" textLength="33.4" lengthAdjust="spacingAndGlyphs" >Excluir</text>
<path d="M1083.5,128.0 L1088.5,128.0 L1086,131.0 Z" fill="#444" />
<line x1="1121" y1="74.4" x2="1142.5" y2="74.4" stroke="#3b7fc4" stroke-width="1.2" />
<path d="M1121.5,74.4 l3,-2.5 M1121.5,74.4 l3,2.5 M1142,74.4 l-3,-2.5 M1142,74.4 l-3,2.5" fill="none" stroke="#3b7fc4" stroke-width="1.2" />
<line x1="1120.5" y1="72.2" x2="1120.5" y2="76.7" stroke="#3b7fc4" stroke-width="1" />
<line x1="1143" y1="72.2" x2="1143" y2="76.7" stroke="#3b7fc4" stroke-width="1" />
<rect x="1120.5" y="78.5" width="27" height="20" fill="#fff" stroke="#777" stroke-width="1.3" />
<line x1="1127.9" y1="78.5" x2="1127.9" y2="98.5" stroke="#777" stroke-width="1" />
<line x1="1135.5" y1="78.5" x2="1135.5" y2="98.5" stroke="#777" stroke-width="1" />
<line x1="1142.9" y1="78.5" x2="1142.9" y2="98.5" stroke="#777" stroke-width="1" />
<line x1="1120.5" y1="83.6" x2="1147.5" y2="83.6" stroke="#777" stroke-width="1" />
<line x1="1120.5" y1="93.6" x2="1147.5" y2="93.6" stroke="#777" stroke-width="1" />
<rect x="1128.4" y="84.1" width="6.6" height="9" fill="#3b7fc4" />
<path d="M1120.5,98.5 v4 h6 l2,-4 M1129.5,98.5 v4 h6 l2,-4" fill="none" stroke="#777" stroke-width="1" />
<text x="1110.6" y="117.8" font-size="12" fill="#262626" textLength="47.0" lengthAdjust="spacingAndGlyphs" >Formatar</text>
<path d="M1131.5,128.0 L1136.5,128.0 L1134,131.0 Z" fill="#444" />
<text x="1074.6" y="152.7" font-size="11" fill="#262626" textLength="36.0" lengthAdjust="spacingAndGlyphs" >Células</text>
<line x1="1165.5" y1="69" x2="1165.5" y2="152" stroke="#dadada" stroke-width="1" />
<path d="M1173,71 h15 v2.3 h-11 l6,5.2 l-6,5.2 h11 v2.3 h-15 v-1.6 l6.8,-5.9 l-6.8,-5.9 z" fill="#a0a0a0" />
<path d="M1195.0,77.7 L1200.0,77.7 L1197.5,80.7 Z" fill="#555" />
<rect x="1174.5" y="94.5" width="13" height="15" fill="#fff" stroke="#666" stroke-width="1" />
<rect x="1174.5" y="94.5" width="13" height="3" fill="#666" />
<path d="M1181,99 v7 m-3,-3 l3,3 l3,-3" fill="none" stroke="#3b7fc4" stroke-width="1.6" />
<path d="M1193.5,100.1 L1198.5,100.1 L1196,103.1 Z" fill="#555" />
<path d="M1174.5,126.5 l7.5,-8 l4,3.8 l-7.5,8 z" fill="#e8798f" />
<path d="M1174.5,126.5 l4,3.8 l-1,1 l-4,-3.8 z" fill="#f0a6b5" />
<path d="M1193.5,123.8 L1198.5,123.8 L1196,126.8 Z" fill="#555" />
<text x="1219.3" y="85.5" font-size="14.5" fill="#3b7fc4" font-weight="bold" textLength="10.5" lengthAdjust="spacingAndGlyphs" >A</text>
<text x="1220.0" y="99.6" font-size="14.5" fill="#8e5fb5" font-weight="bold" textLength="9.2" lengthAdjust="spacingAndGlyphs" >Z</text>
<path d="M1231.5,81 h16.5 l-6.5,6.8 v8 h-3.5 v-8 z" fill="#8a8a8a" />
<rect x="1238.5" y="88.5" width="2" height="6.5" fill="#fff" />
<text x="1207.2" y="117.8" font-size="12" fill="#262626" textLength="52.7" lengthAdjust="spacingAndGlyphs" >Classificar</text>
<text x="1210.3" y="133.7" font-size="12" fill="#262626" textLength="39.7" lengthAdjust="spacingAndGlyphs" >e Filtrar</text>
<path d="M1252.0,128.5 L1257.0,128.5 L1254.5,131.5 Z" fill="#444" />
<circle cx="1299" cy="82.9" r="8.9" fill="none" stroke="#3b7fc4" stroke-width="2.2"/>
<line x1="1292.8" y1="89.6" x2="1284.2" y2="98.2" stroke="#3b7fc4" stroke-width="3.4" stroke-linecap="round"/>
<text x="1269.4" y="117.8" font-size="12" fill="#262626" textLength="55.2" lengthAdjust="spacingAndGlyphs" >Localizar e</text>
<text x="1265.5" y="133.7" font-size="12" fill="#262626" textLength="54.5" lengthAdjust="spacingAndGlyphs" >Selecionar</text>
<path d="M1322.0,128.5 L1327.0,128.5 L1324.5,131.5 Z" fill="#444" />
<text x="1233.4" y="152.7" font-size="11" fill="#262626" textLength="32.9" lengthAdjust="spacingAndGlyphs" >Edição</text>
<line x1="1334.5" y1="69" x2="1334.5" y2="152" stroke="#dadada" stroke-width="1" />
<path d="M1346.5,152.5 l5,-5 l5,5" fill="none" stroke="#666" stroke-width="1.6" />
<rect x="5.5" y="168.5" width="101" height="25" fill="#fff" stroke="#c6c6c6" stroke-width="1" />
<text x="12.7" y="185.9" font-size="12.3" fill="#262626" textLength="14.9" lengthAdjust="spacingAndGlyphs" >D5</text>
<path d="M93.0,178.0 L100.0,178.0 L96.5,182.0 Z" fill="#666" />
<rect x="121.2" y="176.1" width="1.8" height="1.8" fill="#888" />
<rect x="121.2" y="180.1" width="1.8" height="1.8" fill="#888" />
<rect x="121.2" y="184.1" width="1.8" height="1.8" fill="#888" />
<rect x="137.5" y="168.5" width="109" height="25" fill="#fff" stroke="#c6c6c6" stroke-width="1" />
<path d="M151,177 l10,8.5 M161,177 l-10,8.5" fill="none" stroke="#b4b4b4" stroke-width="1.3" />
<path d="M186,181.5 l4,4.5 l8.5,-9.5" fill="none" stroke="#c4c4c4" stroke-width="2" />
<text x="222.5" y="186" font-size="14" fill="#555" font-style="italic" font-family="Liberation Serif">f</text>
<text x="228.2" y="186" font-size="9.5" fill="#555" font-style="italic" font-family="Liberation Serif">x</text>
<rect x="250.5" y="168.5" width="1110" height="25" fill="#fff" stroke="#c6c6c6" stroke-width="1" />
<text x="262.5" y="185.5" font-size="12.3" fill="#262626" textLength="58.9" lengthAdjust="spacingAndGlyphs" >Geladeira</text>
<path d="M1349,179 l3.5,3.5 l3.5,-3.5" fill="none" stroke="#666" stroke-width="1.6" />
<rect x="59.1" y="204" width="186.5" height="16.5" fill="#d2d2d2" />
<line x1="40.4" y1="204" x2="40.4" y2="220.5" stroke="#b4b4b4" stroke-width="1" />
<line x1="50.4" y1="204" x2="50.4" y2="220.5" stroke="#b4b4b4" stroke-width="1" />
<line x1="59.1" y1="204" x2="59.1" y2="220.5" stroke="#b4b4b4" stroke-width="1" />
<line x1="145.6" y1="204" x2="145.6" y2="220.5" stroke="#b4b4b4" stroke-width="1" />
<line x1="245.6" y1="204" x2="245.6" y2="220.5" stroke="#b4b4b4" stroke-width="1" />
<line x1="257.5" y1="204" x2="257.5" y2="220.5" stroke="#b4b4b4" stroke-width="1" />
<line x1="380.5" y1="204" x2="380.5" y2="220.5" stroke="#b4b4b4" stroke-width="1" />
<line x1="503.8" y1="204" x2="503.8" y2="220.5" stroke="#b4b4b4" stroke-width="1" />
<line x1="518.3" y1="204" x2="518.3" y2="220.5" stroke="#b4b4b4" stroke-width="1" />
<line x1="641.3" y1="204" x2="641.3" y2="220.5" stroke="#b4b4b4" stroke-width="1" />
<line x1="764.4" y1="204" x2="764.4" y2="220.5" stroke="#b4b4b4" stroke-width="1" />
<line x1="779.2" y1="204" x2="779.2" y2="220.5" stroke="#b4b4b4" stroke-width="1" />
<line x1="902.3" y1="204" x2="902.3" y2="220.5" stroke="#b4b4b4" stroke-width="1" />
<line x1="1025.4" y1="204" x2="1025.4" y2="220.5" stroke="#b4b4b4" stroke-width="1" />
<line x1="1040.9" y1="204" x2="1040.9" y2="220.5" stroke="#b4b4b4" stroke-width="1" />
<line x1="1164" y1="204" x2="1164" y2="220.5" stroke="#b4b4b4" stroke-width="1" />
<line x1="1287.1" y1="204" x2="1287.1" y2="220.5" stroke="#b4b4b4" stroke-width="1" />
<line x1="1344.5" y1="204" x2="1344.5" y2="220.5" stroke="#b4b4b4" stroke-width="1" />
<line x1="0" y1="204" x2="0" y2="204" stroke="#000" stroke-width="0" />
<line x1="26" y1="220" x2="59.1" y2="220" stroke="#c8c8c8" stroke-width="1" />
<rect x="59.1" y="218.5" width="186.5" height="2" fill="#217346" />
<line x1="26" y1="204" x2="26" y2="220.5" stroke="#c8c8c8" stroke-width="1" />
<text x="33.2" y="215.8" font-size="12.3" fill="#262626" text-anchor="middle" >A</text>
<text x="45.4" y="215.8" font-size="12.3" fill="#262626" text-anchor="middle" >B</text>
<text x="54.8" y="215.8" font-size="12.3" fill="#262626" text-anchor="middle" >C</text>
<text x="102.3" y="215.8" font-size="12.3" fill="#217346" text-anchor="middle" >D</text>
<text x="195.6" y="215.8" font-size="12.3" fill="#217346" text-anchor="middle" >E</text>
<text x="251.6" y="215.8" font-size="12.3" fill="#262626" text-anchor="middle" >F</text>
<text x="319.0" y="215.8" font-size="12.3" fill="#262626" text-anchor="middle" >G</text>
<text x="442.1" y="215.8" font-size="12.3" fill="#262626" text-anchor="middle" >H</text>
<text x="511.0" y="215.8" font-size="12.3" fill="#262626" text-anchor="middle" >I</text>
<text x="579.8" y="215.8" font-size="12.3" fill="#262626" text-anchor="middle" >J</text>
<text x="702.8" y="215.8" font-size="12.3" fill="#262626" text-anchor="middle" >K</text>
<text x="771.8" y="215.8" font-size="12.3" fill="#262626" text-anchor="middle" >L</text>
<text x="840.8" y="215.8" font-size="12.3" fill="#262626" text-anchor="middle" >M</text>
<text x="963.9" y="215.8" font-size="12.3" fill="#262626" text-anchor="middle" >N</text>
<text x="1033.2" y="215.8" font-size="12.3" fill="#262626" text-anchor="middle" >O</text>
<text x="1102.5" y="215.8" font-size="12.3" fill="#262626" text-anchor="middle" >P</text>
<text x="1225.5" y="215.8" font-size="12.3" fill="#262626" text-anchor="middle" >Q</text>
<text x="1326.0" y="215.8" font-size="12.3" fill="#262626" text-anchor="middle" >R</text>
<path d="M22,208 v9 h-9 z" fill="#c4c4c4" />
<rect x="0" y="350" width="25" height="61" fill="#d2d2d2" />
<line x1="0" y1="267" x2="25" y2="267" stroke="#b8b8b8" stroke-width="1" />
<text x="13.0" y="262.1" font-size="12.3" fill="#262626" text-anchor="middle" >1</text>
<line x1="0" y1="303.5" x2="25" y2="303.5" stroke="#b8b8b8" stroke-width="1" />
<text x="13.0" y="298.6" font-size="12.3" fill="#262626" text-anchor="middle" >2</text>
<line x1="0" y1="320" x2="25" y2="320" stroke="#b8b8b8" stroke-width="1" />
<text x="13.0" y="315.1" font-size="12.3" fill="#262626" text-anchor="middle" >3</text>
<line x1="0" y1="350" x2="25" y2="350" stroke="#b8b8b8" stroke-width="1" />
<text x="13.0" y="345.1" font-size="12.3" fill="#262626" text-anchor="middle" >4</text>
<line x1="0" y1="411" x2="25" y2="411" stroke="#b8b8b8" stroke-width="1" />
<text x="13.0" y="406.1" font-size="12.3" fill="#217346" text-anchor="middle" >5</text>
<line x1="0" y1="416" x2="25" y2="416" stroke="#b8b8b8" stroke-width="1" />
<rect x="11.5" y="411.3" width="4" height="1.2" fill="#262626" />
<line x1="0" y1="452.5" x2="25" y2="452.5" stroke="#b8b8b8" stroke-width="1" />
<text x="13.0" y="447.6" font-size="12.3" fill="#262626" text-anchor="middle" >7</text>
<line x1="0" y1="470.53" x2="25" y2="470.53" stroke="#b8b8b8" stroke-width="1" />
<text x="13.0" y="465.6" font-size="12.3" fill="#262626" text-anchor="middle" >8</text>
<line x1="0" y1="488.55999999999995" x2="25" y2="488.55999999999995" stroke="#b8b8b8" stroke-width="1" />
<text x="13.0" y="483.7" font-size="12.3" fill="#262626" text-anchor="middle" >9</text>
<line x1="0" y1="506.5899999999999" x2="25" y2="506.5899999999999" stroke="#b8b8b8" stroke-width="1" />
<text x="13.0" y="501.7" font-size="12.3" fill="#262626" text-anchor="middle" >10</text>
<line x1="0" y1="524.6199999999999" x2="25" y2="524.6199999999999" stroke="#b8b8b8" stroke-width="1" />
<text x="13.0" y="519.7" font-size="12.3" fill="#262626" text-anchor="middle" >11</text>
<line x1="0" y1="542.6499999999999" x2="25" y2="542.6499999999999" stroke="#b8b8b8" stroke-width="1" />
<text x="13.0" y="537.7" font-size="12.3" fill="#262626" text-anchor="middle" >12</text>
<line x1="0" y1="560.6799999999998" x2="25" y2="560.6799999999998" stroke="#b8b8b8" stroke-width="1" />
<text x="13.0" y="555.8" font-size="12.3" fill="#262626" text-anchor="middle" >13</text>
<line x1="0" y1="578.7099999999998" x2="25" y2="578.7099999999998" stroke="#b8b8b8" stroke-width="1" />
<text x="13.0" y="573.8" font-size="12.3" fill="#262626" text-anchor="middle" >14</text>
<line x1="0" y1="596.7399999999998" x2="25" y2="596.7399999999998" stroke="#b8b8b8" stroke-width="1" />
<text x="13.0" y="591.8" font-size="12.3" fill="#262626" text-anchor="middle" >15</text>
<line x1="0" y1="614.7699999999998" x2="25" y2="614.7699999999998" stroke="#b8b8b8" stroke-width="1" />
<text x="13.0" y="609.9" font-size="12.3" fill="#262626" text-anchor="middle" >16</text>
<line x1="0" y1="632.7999999999997" x2="25" y2="632.7999999999997" stroke="#b8b8b8" stroke-width="1" />
<text x="13.0" y="627.9" font-size="12.3" fill="#262626" text-anchor="middle" >17</text>
<line x1="0" y1="650.8299999999997" x2="25" y2="650.8299999999997" stroke="#b8b8b8" stroke-width="1" />
<text x="13.0" y="645.9" font-size="12.3" fill="#262626" text-anchor="middle" >18</text>
<line x1="0" y1="668.8599999999997" x2="25" y2="668.8599999999997" stroke="#b8b8b8" stroke-width="1" />
<text x="13.0" y="664.0" font-size="12.3" fill="#262626" text-anchor="middle" >19</text>
<line x1="0" y1="686.8899999999996" x2="25" y2="686.8899999999996" stroke="#b8b8b8" stroke-width="1" />
<text x="13.0" y="682.0" font-size="12.3" fill="#262626" text-anchor="middle" >20</text>
<line x1="0" y1="704.9199999999996" x2="25" y2="704.9199999999996" stroke="#b8b8b8" stroke-width="1" />
<text x="13.0" y="700.0" font-size="12.3" fill="#262626" text-anchor="middle" >21</text>
<clipPath id="rc"><rect x="0" y="700" width="26" height="17.5"/></clipPath>
<text x="13.0" y="718.0" font-size="12.3" fill="#262626" text-anchor="middle" clip-path="url(#rc)">22</text>
<line x1="25.5" y1="220.5" x2="25.5" y2="718" stroke="#ababab" stroke-width="1" />
<rect x="24" y="350" width="2" height="61" fill="#217346" />
<rect x="26" y="220" width="1318.5" height="497.5" fill="#fff" />
<rect x="26" y="221" width="1318.2" height="46" fill="#404040" />
<rect x="760" y="221" width="121" height="46" fill="#6699cc" />
<rect x="26" y="267" width="1318.2" height="37" fill="#6699cc" />
<rect x="302" y="275" width="191" height="29" fill="#fff" />
<text x="170.6" y="241.2" font-size="11" fill="#fff" font-weight="bold" textLength="94.6" lengthAdjust="spacingAndGlyphs" >CONFIGURAÇÕES</text>
<text x="196.2" y="257.1" font-size="11" fill="#fff" font-weight="bold" textLength="43.6" lengthAdjust="spacingAndGlyphs" >INICIAIS</text>
<text x="308.2" y="249.0" font-size="11" fill="#fff" font-weight="bold" textLength="59.6" lengthAdjust="spacingAndGlyphs" >CADASTRO</text>
<text x="430.0" y="249.0" font-size="11" fill="#fff" font-weight="bold" textLength="57.9" lengthAdjust="spacingAndGlyphs" >PROJEÇÃO</text>
<text x="549.0" y="249.0" font-size="11" fill="#fff" font-weight="bold" textLength="61.5" lengthAdjust="spacingAndGlyphs" >REALIZADO</text>
<text x="665.0" y="249.0" font-size="11" fill="#fff" font-weight="bold" textLength="68.9" lengthAdjust="spacingAndGlyphs" >RELATÓRIOS</text>
<text x="785.1" y="249.0" font-size="11" fill="#fff" font-weight="bold" textLength="70.3" lengthAdjust="spacingAndGlyphs" >DASHBOARD</text>
<text x="906.0" y="249.0" font-size="11" fill="#fff" font-weight="bold" textLength="69.1" lengthAdjust="spacingAndGlyphs" >INSTRUÇÕES</text>
<text x="136.4" y="294.0" font-size="11" fill="#fff" font-weight="bold" textLength="140.6" lengthAdjust="spacingAndGlyphs" >PROJETADO X REALIZADO</text>
<text x="323.9" y="294.0" font-size="11" fill="#404040" font-weight="bold" textLength="147.1" lengthAdjust="spacingAndGlyphs" >DESEMPENHO INDIVIDUAL</text>
<rect x="43.5" y="232.9" width="14.8" height="18.8" rx="5" ry="5" fill="none" stroke="#fff" stroke-width="1.5"/>
<rect x="42" y="237.6" width="3" height="2.2" fill="#404040" />
<rect x="57" y="237.6" width="3" height="2.2" fill="#404040" />
<line x1="48.2" y1="253.3" x2="53.6" y2="253.3" stroke="#fff" stroke-width="1.1" />
<line x1="48.6" y1="255" x2="53.2" y2="255" stroke="#fff" stroke-width="1.1" />
<line x1="49.3" y1="256.6" x2="52.5" y2="256.6" stroke="#fff" stroke-width="1.1" />
<text x="63.8" y="248.0" font-size="13.2" fill="#fff" textLength="22.7" lengthAdjust="spacingAndGlyphs" >LUZ</text>
<line x1="91.3" y1="236" x2="91.3" y2="250.5" stroke="#fff" stroke-width="0.8" />
<text x="96.0" y="242.5" font-size="5.8" fill="#cfcfcf" textLength="21.8" lengthAdjust="spacingAndGlyphs" >Planilhas</text>
<text x="96.0" y="248.0" font-size="5.8" fill="#cfcfcf" textLength="31.9" lengthAdjust="spacingAndGlyphs" >Empresariais</text>
<text x="70.2" y="340.0" font-size="11.5" fill="#000" font-weight="bold" textLength="160.4" lengthAdjust="spacingAndGlyphs" >Selecione o Produto / Serviço</text>
<text x="269.5" y="341.1" font-size="15" fill="#000" font-weight="bold" textLength="130.1" lengthAdjust="spacingAndGlyphs" >Vendas projetadas</text>
<text x="530.5" y="341.1" font-size="15" fill="#000" font-weight="bold" textLength="125.0" lengthAdjust="spacingAndGlyphs" >Vendas realizadas</text>
<text x="791.5" y="341.1" font-size="15" fill="#000" font-weight="bold" textLength="138.0" lengthAdjust="spacingAndGlyphs" >Receitas projetadas</text>
<text x="1052.5" y="341.1" font-size="15" fill="#000" font-weight="bold" textLength="133.3" lengthAdjust="spacingAndGlyphs" >Receitas realizadas</text>
<rect x="58.5" y="349.5" width="188" height="62" fill="#fff" stroke="#217346" stroke-width="2" />
<text x="70.2" y="383.5" font-size="11.5" fill="#000" font-weight="bold" textLength="51.8" lengthAdjust="spacingAndGlyphs" >Geladeira</text>
<rect x="242.5" y="407.5" width="5.5" height="5.5" fill="#217346" />
<rect x="257.5" y="350.7" width="246.0" height="59.5" fill="#7f7f7f" stroke="#d9d9d9" stroke-width="1" />
<text x="348.4" y="392.1" font-size="30.3" fill="#fff" font-weight="bold" textLength="65.6" lengthAdjust="spacingAndGlyphs" >1044</text>
<rect x="518.5" y="350.7" width="246.0" height="59.5" fill="#f2b700" stroke="#d9d9d9" stroke-width="1" />
<text x="616.6" y="392.1" font-size="30.3" fill="#fff" font-weight="bold" textLength="49.6" lengthAdjust="spacingAndGlyphs" >940</text>
<rect x="779.5" y="350.7" width="245.70000000000005" height="59.5" fill="#6699cc" stroke="#d9d9d9" stroke-width="1" />
<text x="826.0" y="392.1" font-size="30.3" fill="#fff" font-weight="bold" textLength="153.5" lengthAdjust="spacingAndGlyphs" >R$ 730.800</text>
<rect x="1040.7" y="350.7" width="245.5" height="59.5" fill="#55ae3f" stroke="#d9d9d9" stroke-width="1" />
<text x="1087.0" y="392.1" font-size="30.3" fill="#fff" font-weight="bold" textLength="153.5" lengthAdjust="spacingAndGlyphs" >R$ 658.000</text>
<rect x="246.5" y="392.5" width="16" height="16" fill="#f3f3f3" stroke="#c6c6c6" stroke-width="1" />
<path d="M251.0,398.8 L258.0,398.8 L254.5,402.8 Z" fill="#666" />
<text x="71.0" y="439.9" font-size="15" fill="#000" font-weight="bold" textLength="51.8" lengthAdjust="spacingAndGlyphs" >Vendas</text>
<text x="677.8" y="439.9" font-size="15" fill="#000" font-weight="bold" textLength="58.8" lengthAdjust="spacingAndGlyphs" >Receitas</text>
<rect x="60.0" y="451.5" width="595.0" height="237" fill="#fff" stroke="#d9d9d9" stroke-width="1" />
<line x1="92.4" y1="640.2" x2="646" y2="640.2" stroke="#d9d9d9" stroke-width="1" />
<text x="0" y="0" font-size="10" fill="#595959" text-anchor="end" transform="translate(82.0,643.9) scale(0.92,1)">0</text>
<line x1="92.4" y1="617.875" x2="646" y2="617.875" stroke="#d9d9d9" stroke-width="1" />
<text x="0" y="0" font-size="10" fill="#595959" text-anchor="end" transform="translate(82.0,621.6) scale(0.92,1)">10</text>
<line x1="92.4" y1="595.5500000000001" x2="646" y2="595.5500000000001" stroke="#d9d9d9" stroke-width="1" />
<text x="0" y="0" font-size="10" fill="#595959" text-anchor="end" transform="translate(82.0,599.3) scale(0.92,1)">20</text>
<line x1="92.4" y1="573.225" x2="646" y2="573.225" stroke="#d9d9d9" stroke-width="1" />
<text x="0" y="0" font-size="10" fill="#595959" text-anchor="end" transform="translate(82.0,576.9) scale(0.92,1)">30</text>
<line x1="92.4" y1="550.9000000000001" x2="646" y2="550.9000000000001" stroke="#d9d9d9" stroke-width="1" />
<text x="0" y="0" font-size="10" fill="#595959" text-anchor="end" transform="translate(82.0,554.6) scale(0.92,1)">40</text>
<line x1="92.4" y1="528.575" x2="646" y2="528.575" stroke="#d9d9d9" stroke-width="1" />
<text x="0" y="0" font-size="10" fill="#595959" text-anchor="end" transform="translate(82.0,532.3) scale(0.92,1)">50</text>
<line x1="92.4" y1="506.25000000000006" x2="646" y2="506.25000000000006" stroke="#d9d9d9" stroke-width="1" />
<text x="0" y="0" font-size="10" fill="#595959" text-anchor="end" transform="translate(82.0,510.0) scale(0.92,1)">60</text>
<line x1="92.4" y1="483.92500000000007" x2="646" y2="483.92500000000007" stroke="#d9d9d9" stroke-width="1" />
<text x="0" y="0" font-size="10" fill="#595959" text-anchor="end" transform="translate(82.0,487.6) scale(0.92,1)">70</text>
<line x1="92.4" y1="461.6" x2="646" y2="461.6" stroke="#d9d9d9" stroke-width="1" />
<text x="0" y="0" font-size="10" fill="#595959" text-anchor="end" transform="translate(82.0,465.3) scale(0.92,1)">80</text>
<text x="0" y="0" font-size="10" fill="#595959" text-anchor="end" transform="translate(103.8,647.3) rotate(-90) scale(0.94,1)">Jan - 18</text>
<text x="0" y="0" font-size="10" fill="#595959" text-anchor="end" transform="translate(119.2,647.3) rotate(-90) scale(0.94,1)">Fev - 18</text>
<text x="0" y="0" font-size="10" fill="#595959" text-anchor="end" transform="translate(134.7,647.3) rotate(-90) scale(0.94,1)">Mar - 18</text>
<text x="0" y="0" font-size="10" fill="#595959" text-anchor="end" transform="translate(150.1,647.3) rotate(-90) scale(0.94,1)">Abr - 18</text>
<text x="0" y="0" font-size="10" fill="#595959" text-anchor="end" transform="translate(165.5,647.3) rotate(-90) scale(0.94,1)">Mai - 18</text>
<text x="0" y="0" font-size="10" fill="#595959" text-anchor="end" transform="translate(181.0,647.3) rotate(-90) scale(0.94,1)">Jun - 18</text>
<text x="0" y="0" font-size="10" fill="#595959" text-anchor="end" transform="translate(196.4,647.3) rotate(-90) scale(0.94,1)">Jul - 18</text>
<text x="0" y="0" font-size="10" fill="#595959" text-anchor="end" transform="translate(211.8,647.3) rotate(-90) scale(0.94,1)">Ago - 18</text>
<text x="0" y="0" font-size="10" fill="#595959" text-anchor="end" transform="translate(227.2,647.3) rotate(-90) scale(0.94,1)">Set - 18</text>
<text x="0" y="0" font-size="10" fill="#595959" text-anchor="end" transform="translate(242.7,647.3) rotate(-90) scale(0.94,1)">Out - 18</text>
<text x="0" y="0" font-size="10" fill="#595959" text-anchor="end" transform="translate(258.1,647.3) rotate(-90) scale(0.94,1)">Nov - 18</text>
<text x="0" y="0" font-size="10" fill="#595959" text-anchor="end" transform="translate(273.5,647.3) rotate(-90) scale(0.94,1)">Dez - 18</text>
<text x="0" y="0" font-size="10" fill="#595959" text-anchor="end" transform="translate(289.0,647.3) rotate(-90) scale(0.94,1)">Jan - 19</text>
<text x="0" y="0" font-size="10" fill="#595959" text-anchor="end" transform="translate(304.4,647.3) rotate(-90) scale(0.94,1)">Fev - 19</text>
<text x="0" y="0" font-size="10" fill="#595959" text-anchor="end" transform="translate(319.8,647.3) rotate(-90) scale(0.94,1)">Mar - 19</text>
<text x="0" y="0" font-size="10" fill="#595959" text-anchor="end" transform="translate(335.2,647.3) rotate(-90) scale(0.94,1)">Abr - 19</text>
<text x="0" y="0" font-size="10" fill="#595959" text-anchor="end" transform="translate(350.7,647.3) rotate(-90) scale(0.94,1)">Mai - 19</text>
<text x="0" y="0" font-size="10" fill="#595959" text-anchor="end" transform="translate(366.1,647.3) rotate(-90) scale(0.94,1)">Jun - 19</text>
<text x="0" y="0" font-size="10" fill="#595959" text-anchor="end" transform="translate(381.5,647.3) rotate(-90) scale(0.94,1)">Jul - 19</text>
<text x="0" y="0" font-size="10" fill="#595959" text-anchor="end" transform="translate(397.0,647.3) rotate(-90) scale(0.94,1)">Ago - 19</text>
<text x="0" y="0" font-size="10" fill="#595959" text-anchor="end" transform="translate(412.4,647.3) rotate(-90) scale(0.94,1)">Set - 19</text>
<text x="0" y="0" font-size="10" fill="#595959" text-anchor="end" transform="translate(427.8,647.3) rotate(-90) scale(0.94,1)">Out - 19</text>
<text x="0" y="0" font-size="10" fill="#595959" text-anchor="end" transform="translate(443.3,647.3) rotate(-90) scale(0.94,1)">Nov - 19</text>
<text x="0" y="0" font-size="10" fill="#595959" text-anchor="end" transform="translate(458.7,647.3) rotate(-90) scale(0.94,1)">Dez - 19</text>
<text x="0" y="0" font-size="10" fill="#595959" text-anchor="end" transform="translate(474.1,647.3) rotate(-90) scale(0.94,1)">Jan - 20</text>
<text x="0" y="0" font-size="10" fill="#595959" text-anchor="end" transform="translate(489.6,647.3) rotate(-90) scale(0.94,1)">Fev - 20</text>
<text x="0" y="0" font-size="10" fill="#595959" text-anchor="end" transform="translate(505.0,647.3) rotate(-90) scale(0.94,1)">Mar - 20</text>
<text x="0" y="0" font-size="10" fill="#595959" text-anchor="end" transform="translate(520.4,647.3) rotate(-90) scale(0.94,1)">Abr - 20</text>
<text x="0" y="0" font-size="10" fill="#595959" text-anchor="end" transform="translate(535.8,647.3) rotate(-90) scale(0.94,1)">Mai - 20</text>
<text x="0" y="0" font-size="10" fill="#595959" text-anchor="end" transform="translate(551.3,647.3) rotate(-90) scale(0.94,1)">Jun - 20</text>
<text x="0" y="0" font-size="10" fill="#595959" text-anchor="end" transform="translate(566.7,647.3) rotate(-90) scale(0.94,1)">Jul - 20</text>
<text x="0" y="0" font-size="10" fill="#595959" text-anchor="end" transform="translate(582.1,647.3) rotate(-90) scale(0.94,1)">Ago - 20</text>
<text x="0" y="0" font-size="10" fill="#595959" text-anchor="end" transform="translate(597.6,647.3) rotate(-90) scale(0.94,1)">Set - 20</text>
<text x="0" y="0" font-size="10" fill="#595959" text-anchor="end" transform="translate(613.0,647.3) rotate(-90) scale(0.94,1)">Out - 20</text>
<text x="0" y="0" font-size="10" fill="#595959" text-anchor="end" transform="translate(628.4,647.3) rotate(-90) scale(0.94,1)">Nov - 20</text>
<text x="0" y="0" font-size="10" fill="#595959" text-anchor="end" transform="translate(643.8,647.3) rotate(-90) scale(0.94,1)">Dez - 20</text>
<path d="M100.00,606.71 C102.57,606.34 110.29,605.22 115.43,604.48 C120.57,603.74 125.72,602.62 130.86,602.25 C136.00,601.88 141.15,602.62 146.29,602.25 C151.43,601.88 156.58,600.76 161.72,600.02 C166.86,599.27 172.01,598.53 177.15,597.78 C182.29,597.04 187.44,595.92 192.58,595.55 C197.72,595.18 202.87,595.92 208.01,595.55 C213.15,595.18 218.30,594.06 223.44,593.32 C228.58,592.57 233.73,591.83 238.87,591.09 C244.01,590.34 249.16,589.22 254.30,588.85 C259.44,588.48 264.59,589.22 269.73,588.85 C274.87,588.48 280.02,587.36 285.16,586.62 C290.30,585.88 295.45,585.13 300.59,584.39 C305.73,583.64 310.88,582.90 316.02,582.16 C321.16,581.41 326.31,580.67 331.45,579.92 C336.59,579.18 341.74,578.43 346.88,577.69 C352.02,576.95 357.17,576.20 362.31,575.46 C367.45,574.71 372.60,573.97 377.74,573.23 C382.88,572.48 388.03,571.74 393.17,570.99 C398.31,570.25 403.46,569.88 408.60,568.76 C413.74,567.64 418.89,565.41 424.03,564.30 C429.17,563.18 434.32,562.81 439.46,562.06 C444.60,561.32 449.75,560.20 454.89,559.83 C460.03,559.46 465.18,560.20 470.32,559.83 C475.46,559.46 480.61,557.97 485.75,557.60 C490.89,557.23 496.04,557.60 501.18,557.60 C506.32,557.60 511.47,557.97 516.61,557.60 C521.75,557.23 526.90,555.74 532.04,555.37 C537.18,554.99 542.33,555.37 547.47,555.37 C552.61,555.37 557.76,555.37 562.90,555.37 C568.04,555.37 573.19,555.74 578.33,555.37 C583.47,554.99 588.62,553.50 593.76,553.13 C598.90,552.76 604.05,553.13 609.19,553.13 C614.33,553.13 619.48,553.50 624.62,553.13 C629.76,552.76 637.48,551.27 640.05,550.90" fill="none" stroke="#7f7f7f" stroke-width="2.2" stroke-linejoin="round" stroke-linecap="round"/>
<path d="M100.00,604.48 C102.57,605.22 110.29,608.20 115.43,608.95 C120.57,609.69 125.72,608.95 130.86,608.95 C136.00,608.95 141.15,609.32 146.29,608.95 C151.43,608.57 156.58,607.08 161.72,606.71 C166.86,606.34 172.01,607.46 177.15,606.71 C182.29,605.97 187.44,603.36 192.58,602.25 C197.72,601.13 202.87,602.99 208.01,600.02 C213.15,597.04 218.30,581.41 223.44,584.39 C228.58,587.36 233.73,614.53 238.87,617.88 C244.01,621.22 249.16,609.69 254.30,604.48 C259.44,599.27 264.59,589.97 269.73,586.62 C274.87,583.27 280.02,585.88 285.16,584.39 C290.30,582.90 295.45,579.55 300.59,577.69 C305.73,575.83 310.88,570.25 316.02,573.23 C321.16,576.20 326.31,591.83 331.45,595.55 C336.59,599.27 341.74,595.55 346.88,595.55 C352.02,595.55 357.17,595.18 362.31,595.55 C367.45,595.92 373.72,604.46 377.74,597.78 C382.88,589.22 388.03,553.13 393.17,544.20 C397.02,537.52 404.63,537.59 408.60,544.20 C413.74,552.76 418.89,599.27 424.03,595.55 C429.17,591.83 434.32,533.04 439.46,521.88 C442.98,514.24 451.55,520.85 454.89,528.58 C460.03,540.48 465.18,583.27 470.32,593.32 C473.98,600.47 480.61,589.22 485.75,588.85 C490.89,588.48 498.84,598.52 501.18,591.09 C506.32,574.71 511.47,506.25 516.61,490.62 C519.24,482.63 529.47,489.31 532.04,497.32 C537.18,513.32 542.33,571.74 547.47,586.62 C549.99,593.91 557.76,586.62 562.90,586.62 C568.04,586.62 573.19,586.99 578.33,586.62 C583.47,586.25 588.62,584.76 593.76,584.39 C598.90,584.02 604.05,584.39 609.19,584.39 C614.33,584.39 619.48,584.76 624.62,584.39 C629.76,584.02 637.48,582.53 640.05,582.16" fill="none" stroke="#ffc000" stroke-width="2.4" stroke-linejoin="round" stroke-linecap="round"/>
<rect x="673.0" y="451.5" width="614.0" height="237" fill="#fff" stroke="#d9d9d9" stroke-width="1" />
<line x1="727.5" y1="641.3" x2="1286" y2="641.3" stroke="#d9d9d9" stroke-width="1" />
<text x="0" y="0" font-size="10" fill="#595959" text-anchor="end" transform="translate(716.9,645.0) scale(0.92,1)">R$ 0</text>
<line x1="727.5" y1="612.3" x2="1286" y2="612.3" stroke="#d9d9d9" stroke-width="1" />
<text x="0" y="0" font-size="10" fill="#595959" text-anchor="end" transform="translate(716.9,616.0) scale(0.92,1)">R$ 10.000</text>
<line x1="727.5" y1="583.3" x2="1286" y2="583.3" stroke="#d9d9d9" stroke-width="1" />
<text x="0" y="0" font-size="10" fill="#595959" text-anchor="end" transform="translate(716.9,587.0) scale(0.92,1)">R$ 20.000</text>
<line x1="727.5" y1="554.3" x2="1286" y2="554.3" stroke="#d9d9d9" stroke-width="1" />
<text x="0" y="0" font-size="10" fill="#595959" text-anchor="end" transform="translate(716.9,558.0) scale(0.92,1)">R$ 30.000</text>
<line x1="727.5" y1="525.3" x2="1286" y2="525.3" stroke="#d9d9d9" stroke-width="1" />
<text x="0" y="0" font-size="10" fill="#595959" text-anchor="end" transform="translate(716.9,529.0) scale(0.92,1)">R$ 40.000</text>
<line x1="727.5" y1="496.29999999999995" x2="1286" y2="496.29999999999995" stroke="#d9d9d9" stroke-width="1" />
<text x="0" y="0" font-size="10" fill="#595959" text-anchor="end" transform="translate(716.9,500.0) scale(0.92,1)">R$ 50.000</text>
<line x1="727.5" y1="467.29999999999995" x2="1286" y2="467.29999999999995" stroke="#d9d9d9" stroke-width="1" />
<text x="0" y="0" font-size="10" fill="#595959" text-anchor="end" transform="translate(716.9,471.0) scale(0.92,1)">R$ 60.000</text>
<text x="0" y="0" font-size="10" fill="#595959" text-anchor="end" transform="translate(739.2,649.1) rotate(-90) scale(0.94,1)">Jan - 18</text>
<text x="0" y="0" font-size="10" fill="#595959" text-anchor="end" transform="translate(754.7,649.1) rotate(-90) scale(0.94,1)">Fev - 18</text>
<text x="0" y="0" font-size="10" fill="#595959" text-anchor="end" transform="translate(770.3,649.1) rotate(-90) scale(0.94,1)">Mar - 18</text>
<text x="0" y="0" font-size="10" fill="#595959" text-anchor="end" transform="translate(785.8,649.1) rotate(-90) scale(0.94,1)">Abr - 18</text>
<text x="0" y="0" font-size="10" fill="#595959" text-anchor="end" transform="translate(801.4,649.1) rotate(-90) scale(0.94,1)">Mai - 18</text>
<text x="0" y="0" font-size="10" fill="#595959" text-anchor="end" transform="translate(816.9,649.1) rotate(-90) scale(0.94,1)">Jun - 18</text>
<text x="0" y="0" font-size="10" fill="#595959" text-anchor="end" transform="translate(832.4,649.1) rotate(-90) scale(0.94,1)">Jul - 18</text>
<text x="0" y="0" font-size="10" fill="#595959" text-anchor="end" transform="translate(848.0,649.1) rotate(-90) scale(0.94,1)">Ago - 18</text>
<text x="0" y="0" font-size="10" fill="#595959" text-anchor="end" transform="translate(863.5,649.1) rotate(-90) scale(0.94,1)">Set - 18</text>
<text x="0" y="0" font-size="10" fill="#595959" text-anchor="end" transform="translate(879.1,649.1) rotate(-90) scale(0.94,1)">Out - 18</text>
<text x="0" y="0" font-size="10" fill="#595959" text-anchor="end" transform="translate(894.6,649.1) rotate(-90) scale(0.94,1)">Nov - 18</text>
<text x="0" y="0" font-size="10" fill="#595959" text-anchor="end" transform="translate(910.1,649.1) rotate(-90) scale(0.94,1)">Dez - 18</text>
<text x="0" y="0" font-size="10" fill="#595959" text-anchor="end" transform="translate(925.7,649.1) rotate(-90) scale(0.94,1)">Jan - 19</text>
<text x="0" y="0" font-size="10" fill="#595959" text-anchor="end" transform="translate(941.2,649.1) rotate(-90) scale(0.94,1)">Fev - 19</text>
<text x="0" y="0" font-size="10" fill="#595959" text-anchor="end" transform="translate(956.8,649.1) rotate(-90) scale(0.94,1)">Mar - 19</text>
<text x="0" y="0" font-size="10" fill="#595959" text-anchor="end" transform="translate(972.3,649.1) rotate(-90) scale(0.94,1)">Abr - 19</text>
<text x="0" y="0" font-size="10" fill="#595959" text-anchor="end" transform="translate(987.8,649.1) rotate(-90) scale(0.94,1)">Mai - 19</text>
<text x="0" y="0" font-size="10" fill="#595959" text-anchor="end" transform="translate(1003.4,649.1) rotate(-90) scale(0.94,1)">Jun - 19</text>
<text x="0" y="0" font-size="10" fill="#595959" text-anchor="end" transform="translate(1018.9,649.1) rotate(-90) scale(0.94,1)">Jul - 19</text>
<text x="0" y="0" font-size="10" fill="#595959" text-anchor="end" transform="translate(1034.5,649.1) rotate(-90) scale(0.94,1)">Ago - 19</text>
<text x="0" y="0" font-size="10" fill="#595959" text-anchor="end" transform="translate(1050.0,649.1) rotate(-90) scale(0.94,1)">Set - 19</text>
<text x="0" y="0" font-size="10" fill="#595959" text-anchor="end" transform="translate(1065.5,649.1) rotate(-90) scale(0.94,1)">Out - 19</text>
<text x="0" y="0" font-size="10" fill="#595959" text-anchor="end" transform="translate(1081.1,649.1) rotate(-90) scale(0.94,1)">Nov - 19</text>
<text x="0" y="0" font-size="10" fill="#595959" text-anchor="end" transform="translate(1096.6,649.1) rotate(-90) scale(0.94,1)">Dez - 19</text>
<text x="0" y="0" font-size="10" fill="#595959" text-anchor="end" transform="translate(1112.2,649.1) rotate(-90) scale(0.94,1)">Jan - 20</text>
<text x="0" y="0" font-size="10" fill="#595959" text-anchor="end" transform="translate(1127.7,649.1) rotate(-90) scale(0.94,1)">Fev - 20</text>
<text x="0" y="0" font-size="10" fill="#595959" text-anchor="end" transform="translate(1143.2,649.1) rotate(-90) scale(0.94,1)">Mar - 20</text>
<text x="0" y="0" font-size="10" fill="#595959" text-anchor="end" transform="translate(1158.8,649.1) rotate(-90) scale(0.94,1)">Abr - 20</text>
<text x="0" y="0" font-size="10" fill="#595959" text-anchor="end" transform="translate(1174.3,649.1) rotate(-90) scale(0.94,1)">Mai - 20</text>
<text x="0" y="0" font-size="10" fill="#595959" text-anchor="end" transform="translate(1189.9,649.1) rotate(-90) scale(0.94,1)">Jun - 20</text>
<text x="0" y="0" font-size="10" fill="#595959" text-anchor="end" transform="translate(1205.4,649.1) rotate(-90) scale(0.94,1)">Jul - 20</text>
<text x="0" y="0" font-size="10" fill="#595959" text-anchor="end" transform="translate(1220.9,649.1) rotate(-90) scale(0.94,1)">Ago - 20</text>
<text x="0" y="0" font-size="10" fill="#595959" text-anchor="end" transform="translate(1236.5,649.1) rotate(-90) scale(0.94,1)">Set - 20</text>
<text x="0" y="0" font-size="10" fill="#595959" text-anchor="end" transform="translate(1252.0,649.1) rotate(-90) scale(0.94,1)">Out - 20</text>
<text x="0" y="0" font-size="10" fill="#595959" text-anchor="end" transform="translate(1267.6,649.1) rotate(-90) scale(0.94,1)">Nov - 20</text>
<text x="0" y="0" font-size="10" fill="#595959" text-anchor="end" transform="translate(1283.1,649.1) rotate(-90) scale(0.94,1)">Dez - 20</text>
<path d="M735.40,610.85 C737.99,610.51 745.76,609.50 750.94,608.82 C756.12,608.14 761.30,607.13 766.48,606.79 C771.66,606.45 776.84,607.13 782.02,606.79 C787.20,606.45 792.38,605.44 797.56,604.76 C802.74,604.08 807.92,603.41 813.10,602.73 C818.28,602.05 823.46,601.04 828.64,600.70 C833.82,600.36 839.00,601.04 844.18,600.70 C849.36,600.36 854.54,599.35 859.72,598.67 C864.90,597.99 870.08,597.32 875.26,596.64 C880.44,595.96 885.62,594.95 890.80,594.61 C895.98,594.27 901.16,594.95 906.34,594.61 C911.52,594.27 916.70,593.26 921.88,592.58 C927.06,591.90 932.24,591.23 937.42,590.55 C942.60,589.87 947.78,589.20 952.96,588.52 C958.14,587.84 963.32,587.17 968.50,586.49 C973.68,585.81 978.86,585.14 984.04,584.46 C989.22,583.78 994.40,583.11 999.58,582.43 C1004.76,581.75 1009.94,581.08 1015.12,580.40 C1020.30,579.72 1025.48,579.05 1030.66,578.37 C1035.84,577.69 1041.02,577.35 1046.20,576.34 C1051.38,575.32 1056.56,573.29 1061.74,572.28 C1066.92,571.26 1072.10,570.93 1077.28,570.25 C1082.46,569.57 1087.64,568.56 1092.82,568.22 C1098.00,567.88 1103.18,568.56 1108.36,568.22 C1113.54,567.88 1118.72,566.53 1123.90,566.19 C1129.08,565.85 1134.26,566.19 1139.44,566.19 C1144.62,566.19 1149.80,566.53 1154.98,566.19 C1160.16,565.85 1165.34,564.50 1170.52,564.16 C1175.70,563.82 1180.88,564.16 1186.06,564.16 C1191.24,564.16 1196.42,564.16 1201.60,564.16 C1206.78,564.16 1211.96,564.50 1217.14,564.16 C1222.32,563.82 1227.50,562.47 1232.68,562.13 C1237.86,561.79 1243.04,562.13 1248.22,562.13 C1253.40,562.13 1258.58,562.47 1263.76,562.13 C1268.94,561.79 1276.71,560.44 1279.30,560.10" fill="none" stroke="#5b8fcf" stroke-width="2.2" stroke-linejoin="round" stroke-linecap="round"/>
<path d="M735.40,608.82 C737.99,609.50 745.76,612.20 750.94,612.88 C756.12,613.56 761.30,612.88 766.48,612.88 C771.66,612.88 776.84,613.22 782.02,612.88 C787.20,612.54 792.38,611.19 797.56,610.85 C802.74,610.51 807.92,611.53 813.10,610.85 C818.28,610.17 823.46,607.80 828.64,606.79 C833.82,605.77 839.00,607.47 844.18,604.76 C849.36,602.05 854.54,587.84 859.72,590.55 C864.90,593.26 870.08,617.96 875.26,621.00 C880.44,624.04 885.62,613.56 890.80,608.82 C895.98,604.08 901.16,595.62 906.34,592.58 C911.52,589.53 916.70,591.90 921.88,590.55 C927.06,589.20 932.24,586.15 937.42,584.46 C942.60,582.77 947.78,577.69 952.96,580.40 C958.14,583.11 963.32,597.32 968.50,600.70 C973.68,604.08 978.86,600.70 984.04,600.70 C989.22,600.70 994.40,600.36 999.58,600.70 C1004.76,601.04 1010.78,609.25 1015.12,602.73 C1020.30,594.95 1025.48,562.13 1030.66,554.01 C1034.84,547.46 1041.89,547.54 1046.20,554.01 C1051.38,561.79 1056.56,604.08 1061.74,600.70 C1066.92,597.32 1072.10,543.86 1077.28,533.71 C1081.07,526.28 1089.22,532.27 1092.82,539.80 C1098.00,550.63 1103.18,589.53 1108.36,598.67 C1112.32,605.66 1118.72,594.95 1123.90,594.61 C1129.08,594.27 1136.86,604.04 1139.44,596.64 C1144.62,581.75 1149.80,519.50 1154.98,505.29 C1157.84,497.45 1167.72,503.52 1170.52,511.38 C1175.70,525.93 1180.88,579.05 1186.06,592.58 C1188.84,599.84 1196.42,592.58 1201.60,592.58 C1206.78,592.58 1211.96,592.92 1217.14,592.58 C1222.32,592.24 1227.50,590.89 1232.68,590.55 C1237.86,590.21 1243.04,590.55 1248.22,590.55 C1253.40,590.55 1258.58,590.89 1263.76,590.55 C1268.94,590.21 1276.71,588.86 1279.30,588.52" fill="none" stroke="#55ad3c" stroke-width="2.3" stroke-linejoin="round" stroke-linecap="round"/>
<rect x="1344.5" y="204" width="21.5" height="514" fill="#e6e6e6" />
<line x1="1344.5" y1="221" x2="1344.5" y2="718" stroke="#9c9c9c" stroke-width="1" />
<rect x="1348.5" y="206.5" width="14" height="14" fill="#fff" stroke="#c6c6c6" stroke-width="1" />
<path d="M1351.5,215.5 l4,-4 l4,4 z" fill="#777" />
<rect x="1348.5" y="221.5" width="14" height="460" fill="#fff" stroke="#c6c6c6" stroke-width="1" />
<rect x="1348.5" y="682" width="14" height="21.5" fill="#dadada" />
<rect x="1348.5" y="703.5" width="14" height="14" fill="#fff" stroke="#c6c6c6" stroke-width="1" />
<path d="M1352,709 l3.5,4 l3.5,-4 z" fill="#6a6a6a" />
<line x1="0" y1="717.5" x2="1345" y2="717.5" stroke="#9c9c9c" stroke-width="1" />
<path d="M31,727 v7 l-4,-3.5 z" fill="#c0c0c0" />
<path d="M56,727 v7 l4,-3.5 z" fill="#c0c0c0" />
<line x1="100.6" y1="721" x2="100.6" y2="741" stroke="#b8b8b8" stroke-width="1" />
<line x1="148.7" y1="721" x2="148.7" y2="741" stroke="#b8b8b8" stroke-width="1" />
<line x1="195.5" y1="721" x2="195.5" y2="741" stroke="#b8b8b8" stroke-width="1" />
<line x1="241.6" y1="721" x2="241.6" y2="741" stroke="#b8b8b8" stroke-width="1" />
<line x1="285.5" y1="721" x2="285.5" y2="741" stroke="#b8b8b8" stroke-width="1" />
<line x1="331.6" y1="721" x2="331.6" y2="741" stroke="#b8b8b8" stroke-width="1" />
<line x1="375.4" y1="721" x2="375.4" y2="741" stroke="#b8b8b8" stroke-width="1" />
<line x1="423.6" y1="721" x2="423.6" y2="741" stroke="#b8b8b8" stroke-width="1" />
<line x1="469.6" y1="721" x2="469.6" y2="741" stroke="#b8b8b8" stroke-width="1" />
<line x1="609.4" y1="721" x2="609.4" y2="741" stroke="#b8b8b8" stroke-width="1" />
<line x1="661.2" y1="721" x2="661.2" y2="741" stroke="#b8b8b8" stroke-width="1" />
<line x1="710.4" y1="721" x2="710.4" y2="741" stroke="#b8b8b8" stroke-width="1" />
<line x1="757.2" y1="721" x2="757.2" y2="741" stroke="#b8b8b8" stroke-width="1" />
<rect x="519.8" y="717" width="47.5" height="24.5" fill="#fff" />
<line x1="519.8" y1="717" x2="519.8" y2="741" stroke="#8c8c8c" stroke-width="1" />
<line x1="567.3" y1="717" x2="567.3" y2="741" stroke="#8c8c8c" stroke-width="1" />
<line x1="519.8" y1="717.5" x2="567.3" y2="717.5" stroke="#8c8c8c" stroke-width="1" />
<rect x="519.8" y="740.5" width="47.5" height="2" fill="#217346" />
<text x="112.5" y="735.0" font-size="12.3" fill="#444" textLength="21.9" lengthAdjust="spacingAndGlyphs" >Con</text>
<text x="160.3" y="735.0" font-size="12.3" fill="#444" textLength="22.4" lengthAdjust="spacingAndGlyphs" >Cad</text>
<text x="207.6" y="735.0" font-size="12.3" fill="#444" textLength="20.2" lengthAdjust="spacingAndGlyphs" >Pve</text>
<text x="253.2" y="735.0" font-size="12.3" fill="#444" textLength="18.5" lengthAdjust="spacingAndGlyphs" >Pre</text>
<text x="297.0" y="735.0" font-size="12.3" fill="#444" textLength="20.0" lengthAdjust="spacingAndGlyphs" >Rve</text>
<text x="342.8" y="735.0" font-size="12.3" fill="#444" textLength="19.8" lengthAdjust="spacingAndGlyphs" >Rre</text>
<text x="386.5" y="735.0" font-size="12.3" fill="#444" textLength="23.5" lengthAdjust="spacingAndGlyphs" >RPR</text>
<text x="436.0" y="735.0" font-size="12.3" fill="#444" textLength="19.0" lengthAdjust="spacingAndGlyphs" >RDI</text>
<text x="482.0" y="735.0" font-size="12.3" fill="#444" textLength="24.3" lengthAdjust="spacingAndGlyphs" >DPR</text>
<text x="579.7" y="735.0" font-size="12.3" fill="#444" textLength="15.9" lengthAdjust="spacingAndGlyphs" >INI</text>
<text x="621.8" y="735.0" font-size="12.3" fill="#444" textLength="25.9" lengthAdjust="spacingAndGlyphs" >DUV</text>
<text x="673.0" y="735.0" font-size="12.3" fill="#444" textLength="24.6" lengthAdjust="spacingAndGlyphs" >SUG</text>
<text x="722.8" y="735.0" font-size="12.3" fill="#444" textLength="21.9" lengthAdjust="spacingAndGlyphs" >LUZ</text>
<text x="531.6" y="735.0" font-size="12.3" fill="#217346" font-weight="bold" textLength="22.9" lengthAdjust="spacingAndGlyphs" >DDI</text>
<circle cx="798.6" cy="731" r="6.8" fill="none" stroke="#777" stroke-width="1.3"/>
<line x1="795" y1="731" x2="802.2" y2="731" stroke="#777" stroke-width="1.5" />
<line x1="798.6" y1="727.4" x2="798.6" y2="734.6" stroke="#777" stroke-width="1.5" />
<rect x="923.8" y="726.2" width="1.6" height="1.6" fill="#aaa" />
<rect x="923.8" y="730.2" width="1.6" height="1.6" fill="#aaa" />
<rect x="923.8" y="734.2" width="1.6" height="1.6" fill="#aaa" />
<rect x="941" y="724" width="406" height="14.5" fill="#dadada" />
<rect x="941.5" y="724.5" width="15" height="14" fill="#fff" stroke="#c6c6c6" stroke-width="1" />
<path d="M951,727.5 v7 l-4,-3.5 z" fill="#777" />
<rect x="956.5" y="724.5" width="95" height="14" fill="#fff" stroke="#c6c6c6" stroke-width="1" />
<rect x="1332.5" y="724.5" width="14" height="14" fill="#fff" stroke="#c6c6c6" stroke-width="1" />
<path d="M1337.5,727.5 v7 l4,-3.5 z" fill="#777" />
<text x="7.2" y="760.0" font-size="12" fill="#262626" textLength="34.1" lengthAdjust="spacingAndGlyphs" >Pronto</text>
<circle cx="65.5" cy="751.5" r="2.6" fill="#555"/>
<rect x="63.5" y="752.5" width="11.5" height="9" fill="#fff" stroke="#555" stroke-width="1" />
<rect x="65.9" y="755.4" width="1.3" height="1.3" fill="#555" />
<rect x="65.9" y="757.9" width="1.3" height="1.3" fill="#555" />
<rect x="68.9" y="755.4" width="1.3" height="1.3" fill="#555" />
<rect x="68.9" y="757.9" width="1.3" height="1.3" fill="#555" />
<rect x="71.9" y="755.4" width="1.3" height="1.3" fill="#555" />
<rect x="71.9" y="757.9" width="1.3" height="1.3" fill="#555" />
<rect x="1086" y="746" width="37.5" height="20" fill="#c8c8c8" />
<rect x="1098.5" y="749.5" width="12" height="12" fill="none" stroke="#6a6a6a" stroke-width="1" />
<line x1="1102.5" y1="749.5" x2="1102.5" y2="761.5" stroke="#6a6a6a" stroke-width="1" />
<line x1="1106.5" y1="749.5" x2="1106.5" y2="761.5" stroke="#6a6a6a" stroke-width="1" />
<line x1="1098.5" y1="753.5" x2="1110.5" y2="753.5" stroke="#6a6a6a" stroke-width="1" />
<line x1="1098.5" y1="757.5" x2="1110.5" y2="757.5" stroke="#6a6a6a" stroke-width="1" />
<rect x="1137" y="750" width="12.5" height="11.5" fill="none" stroke="#6a6a6a" stroke-width="1.2" />
<rect x="1140" y="752.5" width="6.5" height="6.5" fill="none" stroke="#6a6a6a" stroke-width="1" />
<line x1="1141.5" y1="754.3" x2="1145" y2="754.3" stroke="#6a6a6a" stroke-width="0.8" />
<line x1="1141.5" y1="755.8" x2="1145" y2="755.8" stroke="#6a6a6a" stroke-width="0.8" />
<line x1="1141.5" y1="757.3" x2="1145" y2="757.3" stroke="#6a6a6a" stroke-width="0.8" />
<rect x="1174.8" y="750" width="12.5" height="11.5" fill="none" stroke="#6a6a6a" stroke-width="1.2" />
<path d="M1174.8,755.8 h6.5 v-5.8 M1178.3,750 v5.8" fill="none" stroke="#6a6a6a" stroke-width="1" />
<line x1="1205" y1="756.3" x2="1211.3" y2="756.3" stroke="#555" stroke-width="1.8" />
<line x1="1215" y1="756.3" x2="1314.5" y2="756.3" stroke="#a8a8a8" stroke-width="1" />
<rect x="1258" y="750.3" width="5.2" height="10.4" fill="#6a6a6a" />
<line x1="1265.3" y1="753" x2="1265.3" y2="759.5" stroke="#a8a8a8" stroke-width="1" />
<line x1="1318.7" y1="756.3" x2="1325.4" y2="756.3" stroke="#555" stroke-width="1.8" />
<line x1="1322" y1="752.8" x2="1322" y2="759.8" stroke="#555" stroke-width="1.8" />
<text x="1337.1" y="759.5" font-size="11.5" fill="#262626" textLength="20.9" lengthAdjust="spacingAndGlyphs" >90%</text>
<rect x="0" y="766" width="48" height="2" fill="#000" />
<rect x="48" y="766" width="344" height="2" fill="#c8c8c8" />
<rect x="392" y="766" width="150" height="2" fill="#0a0a0a" />
<rect x="542" y="766" width="48" height="2" fill="#555" />
<rect x="590" y="766" width="776" height="2" fill="#0a0a0a" />
</svg>
</body></html>
